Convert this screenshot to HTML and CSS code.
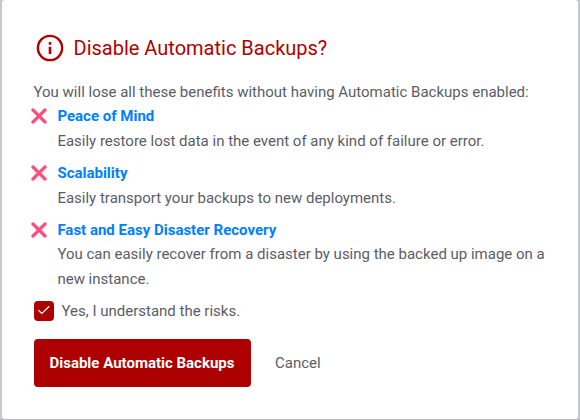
FILE: index.html
```html
<!DOCTYPE html>
<html lang="en">
<head>
<meta charset="utf-8">
<title>Disable Automatic Backups</title>
<link rel="stylesheet" href="styles.css">
</head>
<body>
<main class="dialog">
  <header class="heading">
    <svg class="info" viewBox="0 0 28 28"><circle cx="14" cy="14" r="12.1" fill="none" stroke="#b00000" stroke-width="2.4"/><path d="M14 12.7v7.3M14 8v2.7" stroke="#b00000" stroke-width="2.6"/></svg>
    <h1>Disable Automatic Backups?</h1>
  </header>
  <p class="intro">You will lose all these benefits without having Automatic Backups enabled:</p>
  <ul class="benefits">
    <li><svg class="cross" viewBox="0 0 16 16"><path d="M2 2l12 12M14 2l-12 12"/><path class="core" d="M2 2l12 12M14 2l-12 12"/></svg><h2>Peace of Mind</h2><p>Easily restore lost data in the event of any kind of failure or error.</p></li>
    <li><svg class="cross" viewBox="0 0 16 16"><path d="M2 2l12 12M14 2l-12 12"/><path class="core" d="M2 2l12 12M14 2l-12 12"/></svg><h2>Scalability</h2><p>Easily transport your backups to new deployments.</p></li>
    <li><svg class="cross" viewBox="0 0 16 16"><path d="M2 2l12 12M14 2l-12 12"/><path class="core" d="M2 2l12 12M14 2l-12 12"/></svg><h2>Fast and Easy Disaster Recovery</h2><p>You can easily recover from a disaster by using the backed up image on a new instance.</p></li>
  </ul>
  <label class="confirm"><span class="checkbox"><svg viewBox="0 0 20 20"><path d="M4.5 9.3l3.3 3.2 7.5-7.3"/></svg></span>Yes, I understand the risks.</label>
  <div class="actions"><button class="danger">Disable Automatic Backups</button><button class="cancel">Cancel</button></div>
</main>
</body>
</html>
```
FILE: styles.css
```css
* { box-sizing: border-box; margin: 0; padding: 0; }
body { height: 420px; background: #c6c7cf; border-bottom: 1px solid #b9b9bb; padding: 0 2px; font: 15px/24px Roboto, sans-serif; color: #5b5d66; overflow: hidden; }
.dialog { height: 419px; background: #fff; border-radius: 3px; padding: 34px 24px 0 32px; }
.heading { display: flex; align-items: center; height: 28px; gap: 9.5px; padding-left: 2px; }
.info { width: 28px; height: 28px; }
h1 { font-size: 20px; font-weight: 400; color: #b00000; white-space: nowrap; }
.intro { margin: 18px 0 0 -0.5px; white-space: nowrap; }
.benefits { list-style: none; }
.benefits li { display: grid; grid-template-columns: 23.4px 1fr; margin-bottom: 7px; }
.benefits p { grid-column: 2; line-height: 25px; }
.benefits li:not(:last-child) p { margin-top: 1px; }
.cross { width: 16px; height: 16px; margin: 4px 0 0 -3px; fill: none; stroke: #fd7896; stroke-width: 3.7; stroke-linecap: round; }
.core { stroke: #f84c78; stroke-width: 2.2; }
h2 { font-size: 15px; font-weight: 700; color: #0080ff; }
.confirm { display: flex; align-items: center; gap: 7.5px; height: 24px; }
.checkbox { width: 20px; height: 20px; background: #ad0000; border-radius: 4px; }
.checkbox svg { display: block; fill: none; stroke: #fff; stroke-width: 1.2; }
.actions { display: flex; margin-top: 16px; gap: 24px; }
button { border: 0; height: 48px; font: 15px/24px Roboto, sans-serif; color: #5b5d66; background: none; }
.danger { width: 217px; padding-right: 1px; border-radius: 4px; background: #ad0000; color: #fff; font-weight: 700; }
```
